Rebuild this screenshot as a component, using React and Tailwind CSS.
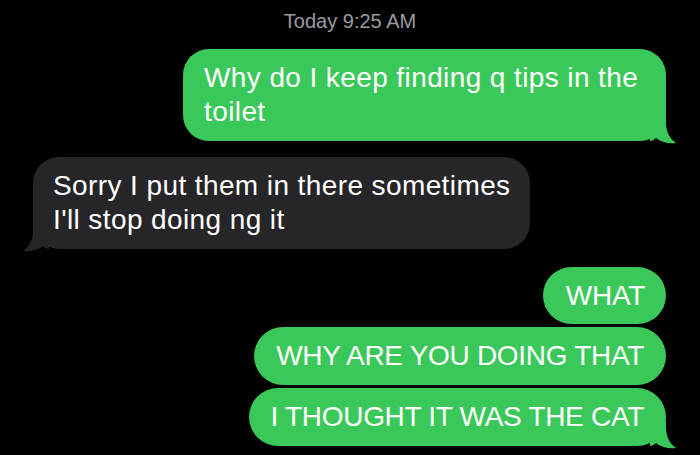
const GREEN = "#3bc85b";

function Tail({ side, color }) {
  if (side === "right") {
    return (
      <svg
        className="absolute bottom-[-3px] right-[-10px]"
        width="26"
        height="28"
        viewBox="0 0 26 28"
      >
        <path
          d="M0 0 H16 V6 C16 15 19 22 26 27 C18 28 11 26 6 22 C4 24 2 25 0 25 Z"
          fill={color}
        />
      </svg>
    );
  }
  return (
    <svg
      className="absolute bottom-[-3px] left-[-10px]"
      width="26"
      height="28"
      viewBox="0 0 26 28"
    >
      <path
        d="M26 0 H10 V6 C10 15 7 22 0 27 C8 28 15 26 20 22 C22 24 24 25 26 25 Z"
        fill={color}
      />
    </svg>
  );
}

function Bubble({ children, side = "right", tail = false, className = "" }) {
  const isMe = side === "right";
  return (
    <div
      className={`relative text-white text-[28px] leading-[34px] ${
        isMe ? "bg-[#3bc85b]" : "bg-[#262629]"
      } ${className}`}
    >
      {children}
      {tail && <Tail side={side} color={isMe ? GREEN : "#262629"} />}
    </div>
  );
}

export default function App() {
  return (
    <div
      className="w-[700px] h-[455px] bg-black overflow-hidden flex flex-col"
      style={{ fontFamily: '"Liberation Sans", Arial, sans-serif' }}
    >
      <div className="text-center text-[20px] text-[#9b9b9f] pt-[9px] leading-[24px]">
        Today 9:25 AM
      </div>

      <div className="flex justify-end pr-[34px] mt-[16px]">
        <Bubble
          tail
          className="w-[483px] rounded-[26px] pl-[21px] pr-[16px] py-[12px] tracking-[0.4px]"
        >
          Why do I keep finding q tips in the
          <br />
          toilet
        </Bubble>
      </div>

      <div className="flex justify-start pl-[33px] mt-[16px]">
        <Bubble
          side="left"
          tail
          className="w-[497px] rounded-[26px] pl-[20px] pr-[12px] py-[12px] tracking-[0.4px]"
        >
          Sorry I put them in there sometimes
          <br />
          I'll stop doing ng it
        </Bubble>
      </div>

      <div className="flex flex-col items-end pr-[34px] mt-[18px] gap-[3px]">
        <Bubble className="rounded-full pl-[23px] pr-[21px] py-[11px] leading-[35px] tracking-[-0.3px]">
          WHAT
        </Bubble>
        <Bubble className="rounded-full pl-[22px] pr-[22px] py-[12px] tracking-[-0.3px]">
          WHY ARE YOU DOING THAT
        </Bubble>
        <Bubble
          tail
          className="rounded-full pl-[22px] pr-[22px] py-[12px] tracking-[-0.3px]"
        >
          I THOUGHT IT WAS THE CAT
        </Bubble>
      </div>
    </div>
  );
}
